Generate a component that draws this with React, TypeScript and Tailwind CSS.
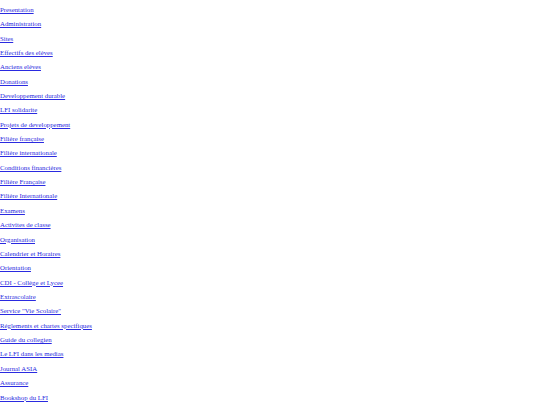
const items = [
  "Presentation",
  "Administration",
  "Sites",
  "Effectifs des elèves",
  "Anciens elèves",
  "Donations",
  "Developpement durable",
  "LFI solidarite",
  "Projets de developpement",
  "Filière française",
  "Filière internationale",
  "Conditions financières",
  "Filière Française",
  "Filière Internationale",
  "Examens",
  "Activites de classe",
  "Organisation",
  "Calendrier et Horaires",
  "Orientation",
  "CDI - Collège et Lycee",
  "Extrascolaire",
  'Service "Vie Scolaire"',
  "Réglements et chartes specifiques",
  "Guide du collegien",
  "Le LFI dans les medias",
  "Journal ASIA",
  "Assurance",
  "Bookshop du LFI",
];

export default function App() {
  return (
    <div className="w-[540px] h-[405px] overflow-hidden bg-white font-['Liberation_Serif',serif]">
      <div className="flex flex-col gap-[6.77px] pt-[5.8px]">
        {items.map((t) => (
          <p key={t} className="text-[6.8px] leading-[7.6px]">
            <a href="#" className="text-[#2a2ae0] underline">
              {t}
            </a>
          </p>
        ))}
      </div>
    </div>
  );
}
